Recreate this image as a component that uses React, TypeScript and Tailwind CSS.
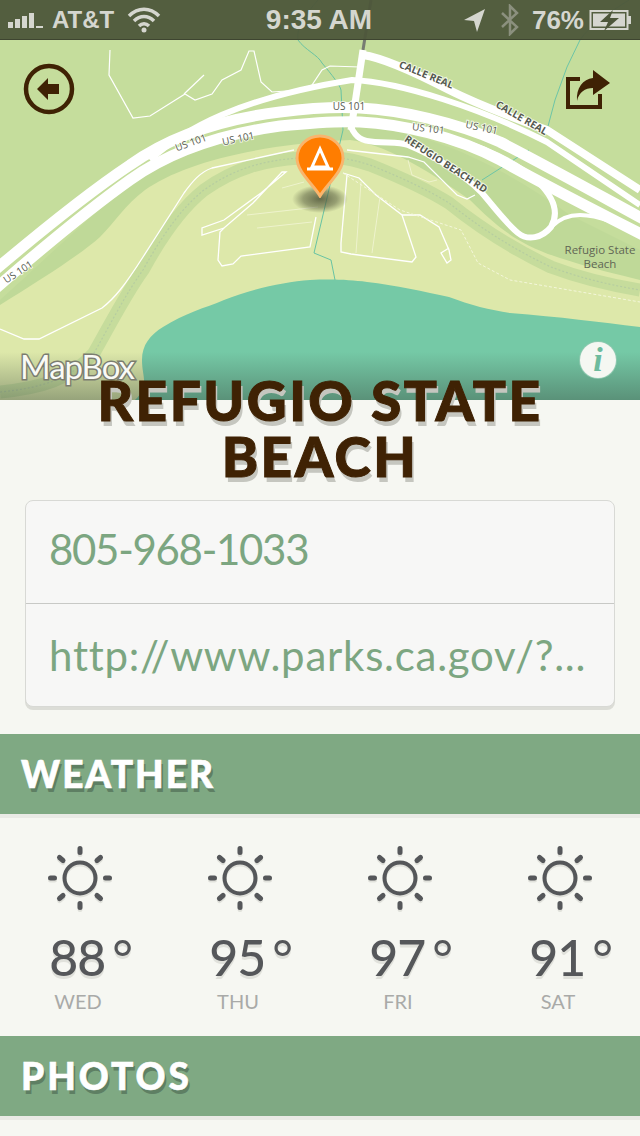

const W = "#ffffff";
const labelFont = "'Open Sans', sans-serif";

function RoadLabel({ x, y, r, t, bold }: { x: number; y: number; r: number; t: string; bold?: boolean }) {
  return (
    <text
      x={0}
      y={0}
      transform={`translate(${x} ${y}) rotate(${r})`}
      textAnchor="middle"
      fontSize={10}
      fontWeight={bold ? 700 : 400}
      fill="#565a50"
      fontFamily={labelFont}
      stroke="#ffffff"
      strokeOpacity="0.75"
      strokeWidth="2"
      paintOrder="stroke"
    >
      {t}
    </text>
  );
}

function MapArt() {
  return (
    <svg viewBox="0 0 640 400" className="absolute inset-0 w-full h-full">
      <defs>
        <linearGradient id="fade" x1="0" y1="0" x2="0" y2="1">
          <stop offset="0" stopColor="#35453a" stopOpacity="0" />
          <stop offset="1" stopColor="#35453a" stopOpacity="0.42" />
        </linearGradient>
        <radialGradient id="sh">
          <stop offset="0" stopColor="#50553a" stopOpacity="0.85" />
          <stop offset="0.6" stopColor="#50553a" stopOpacity="0.5" />
          <stop offset="1" stopColor="#50553a" stopOpacity="0" />
        </radialGradient>
      </defs>
      <rect width="640" height="400" fill="#c5dd9c" />
      <path d="M0 300 C50 255 100 205 150 170 C210 135 290 125 350 125 C430 130 500 165 570 215 L640 250 L640 400 L0 400Z" fill="#bfd998" />
      <path d="M0 305 C40 280 80 255 100 237 C115 222 125 205 145 190 C180 165 250 145 350 140 C385 145 420 165 470 200 C500 230 520 245 560 258 C590 268 620 275 640 280 L640 400 L0 400Z" fill="#dde8aa" />
      <path d="M0 392 C40 388 70 380 94 353 C110 325 125 295 143 270 C165 230 185 205 204 190 C235 168 265 160 300 158 C325 155 345 157 370 165 C395 175 425 188 449 203 C480 228 515 250 551 267 C580 278 610 285 640 290" fill="none" stroke="#c6dc9c" strokeWidth="13" />
      <path d="M0 392 C40 388 70 380 94 353 C110 325 125 295 143 270 C165 230 185 205 204 190 C235 168 265 160 300 158 C325 155 345 157 370 165 C395 175 425 188 449 203 C480 228 515 250 551 267 C580 278 610 285 640 290" fill="none" stroke="#b6cda0" strokeWidth="1.2" strokeDasharray="2 2" />
      <path d="M135 400 C150 385 142 378 142 360 C142 345 150 335 163 327 C185 313 205 308 224 300 C255 288 285 282 310 280 C335 279 350 280 367 282 C395 285 425 292 449 297 C470 305 490 310 510 313 C560 317 600 322 640 327 L640 400Z" fill="#75c9a6" />

      <path d="M318 0 C305 15 296 28 298 40 C305 50 318 55 322 63 C332 75 340 85 341 90 L343 130 L314 253 L331 260 L335 280" fill="none" stroke="#68c3a3" strokeWidth="1" />
      <path d="M629 0 C610 12 590 25 580 40 L567 67 L555 100 L547 130 M529 150 L482 180" fill="none" stroke="#6cc5a7" strokeWidth="1" />

      <path d="M294 150 L212 168 C200 172 192 182 184 193 L143 257 C125 285 115 298 102 308 L39 339 L24 339 L0 329" fill="none" stroke={W} strokeWidth="1.3" />
      <path d="M282 172 L253 203 L224 228 L202 235 L202 228 L224 220 L261 193 L286 172 Z" fill="none" stroke={W} strokeWidth="1.3" />
      <path d="M224 228 L220 232 L218 260 L222 266 L233 264 L241 256 L310 247 L316 217" fill="none" stroke={W} strokeWidth="1.3" />
      <path d="M347 175 L341 243 L341 252 L351 254 L412 262 L416 257 L402 215 L376 195 L359 178 L343 173" fill="none" stroke={W} strokeWidth="1.3" />
      <path d="M402 215 L420 215 L439 227 L449 250 L451 260 L447 263 L441 253 L449 248" fill="none" stroke={W} strokeWidth="1.3" />
      <path d="M347 150 L408 157 L424 162 L457 195 L467 199 L475 195" fill="none" stroke={W} strokeWidth="1.3" />
      <path d="M408 160 L412 175 L429 182 L437 180" fill="none" stroke="#eef3cd" strokeWidth="1" />
      <path d="M247 215 L318 207 M257 228 L312 222 M361 182 L356 253 M380 197 L372 253 M282 188 L304 182" fill="none" stroke="#eef3cd" strokeWidth="1" />
      <path d="M343 173 L400 210 L461 230 L478 263 L510 280 L640 302" fill="none" stroke="#f4f7da" strokeWidth="1" strokeDasharray="3 2" />
      <path d="M110 50 L109 75 L133 118 L150 116 L185 94 L195 100 L212 94 L222 80 L241 70 L249 51 L254 51 L261 82 L272 92 L300 90 L312 85 L322 70 L330 66 L360 67" fill="none" stroke={W} strokeWidth="1.2" />
      <path d="M204 75 L184 94" fill="none" stroke={W} strokeWidth="1.2" />

      <path d="M371 0 L363 50" fill="none" stroke="#777b72" strokeWidth="3" />
      <path d="M363 50 L351 130" fill="none" stroke={W} strokeWidth="7" />
      <path d="M363 55 C385 58 420 75 449 90 C485 108 520 120 547 130 L640 190" fill="none" stroke={W} strokeWidth="8" />
      <path d="M150 160 C185 128 240 98 352 80 C400 82 480 108 547 142 L640 205" fill="none" stroke={W} strokeWidth="6" />
      <path d="M-5 270 C40 232 85 195 130 165 C165 140 215 120 280 112 C320 107 340 107 360 108 C400 110 455 122 500 142 C545 165 590 190 645 220" fill="none" stroke={W} strokeWidth="11" />
      <path d="M-5 289 C40 250 85 212 130 180 C165 155 215 135 280 126 C320 122 340 121 360 122 C400 124 455 136 500 160 C545 185 590 208 645 236" fill="none" stroke={W} strokeWidth="11" />
      <path d="M351 127 C356 138 362 141 375 142 C390 143 400 142 408 145 C432 155 462 172 482 193 C495 208 505 222 518 233 C528 241 542 238 551 227 C558 215 556 200 539 183 C520 165 490 150 457 140" fill="none" stroke={W} strokeWidth="6" />
      <path d="M551 227 C560 218 570 215 580 215 C600 215 620 225 640 235" fill="none" stroke={W} strokeWidth="4" />

      <RoadLabel x={192} y={146} r={-20} t="US 101" />
      <RoadLabel x={239} y={142} r={-12} t="US 101" />
      <RoadLabel x={349} y={110} r={0} t="US 101" />
      <RoadLabel x={428} y={132} r={7} t="US 101" />
      <RoadLabel x={481} y={131} r={12} t="US 101" />
      <RoadLabel x={20} y={275} r={-33} t="US 101" />
      <RoadLabel x={425} y={78} r={22} t="CALLE REAL" bold />
      <RoadLabel x={520} y={121} r={30} t="CALLE REAL" bold />
      <RoadLabel x={444} y={167} r={33} t="REFUGIO BEACH RD" bold />
      <text x="600" y="254" textAnchor="middle" fontSize="11.5" fill="#5f6655" fontFamily={labelFont}>Refugio State</text>
      <text x="600" y="268" textAnchor="middle" fontSize="11.5" fill="#5f6655" fontFamily={labelFont}>Beach</text>

      <ellipse cx="320" cy="199" rx="28" ry="14" fill="url(#sh)" />
      <rect y="352" width="640" height="48" fill="url(#fade)" />
    </svg>
  );
}

function Sun() {
  return (
    <svg width="80" height="80" viewBox="0 0 80 80" className="block">
      {[2, 0].map((dy) => (
        <g key={dy} transform={`translate(0 ${dy})`} stroke={dy ? "#e0e1db" : "#55575a"} fill="none" strokeWidth="5" strokeLinecap="round">
          <circle cx="40" cy="40" r="15.5" strokeWidth="4" />
          <path d="M40 10.5V14.5 M40 65.5V69.5 M10.5 40H14.5 M65.5 40H69.5 M19.5 19.5L23 22.5 M60.5 19.5L57 22.5 M19.5 60.5L23 57.5 M60.5 60.5L57 57.5" />
        </g>
      ))}
    </svg>
  );
}

function Day({ t, d }: { t: string; d: string }) {
  return (
    <div className="flex-1 flex flex-col items-center">
      <Sun />
      <div className="flex items-start h-[50px] mt-[11px] pl-[22px] text-[#55575a] [text-shadow:0_3px_0_#e0e1db]">
        <span className="text-[50px] leading-[56px] tracking-[-1px] font-medium">{t}</span>
        <span className="text-[50px] leading-[56px] ml-[7px]">°</span>
      </div>
      <div className="text-[20px] leading-[24px] mt-[10px] -ml-[4px] text-[#a9aaa8]">{d}</div>
    </div>
  );
}

function Band({ title, tracking }: { title: string; tracking: string }) {
  return (
    <>
      <div className={`h-[80px] bg-[#7fa983] flex items-center pl-[21px] text-[37px] font-black text-white [-webkit-text-stroke:0.6px_#ffffff] [text-shadow:2px_4px_0_#5e7f63] ${tracking}`}>
        {title}
      </div>
      <div className="h-[4px] bg-[#e9eae5]" />
    </>
  );
}

function StatusBar() {
  return (
    <div className="relative h-[40px] shrink-0 bg-[#4d563a]/95 border-b border-[#3e4530] flex items-center justify-between pl-[8px] pr-[7px] text-[#d5d6cf] font-bold [font-family:'Liberation_Sans',sans-serif]">
      <div className="flex items-center w-[172px]">
        <svg width="38" height="18" viewBox="0 0 38 18" fill="#d5d6cf">
          <rect x="0" y="11" width="5" height="6" /><rect x="7" y="8" width="5" height="9" /><rect x="14" y="5" width="5" height="12" /><rect x="21" y="2" width="5" height="15" /><rect x="28" y="15" width="7" height="2" />
        </svg>
        <span className="ml-[6px] text-[24px] leading-[30px]">AT&amp;T</span>
        <svg width="34" height="26" viewBox="0 0 34 26" className="ml-[13px]" fill="none" stroke="#d5d6cf" strokeWidth="3.5">
          <path d="M2 9C11 0 23 0 32 9 M7 14C13 8 21 8 27 14 M12 19C15 16 19 16 22 19" /><circle cx="17" cy="23" r="2.5" fill="#d5d6cf" stroke="none" />
        </svg>
      </div>
      <span className="text-[28px] leading-[34px] -ml-[4px]">9:35 AM</span>
      <div className="flex items-center">
        <svg width="24" height="26" viewBox="0 0 24 26" fill="#d5d6cf"><path d="M2 13L23 2L15 25L12 14Z" /></svg>
        <svg width="20" height="32" viewBox="0 0 20 32" className="ml-[14px]" fill="none" stroke="#8b907e" strokeWidth="2.5"><path d="M2 9L17 23L10 30V2L17 9L2 23" /></svg>
        <span className="ml-[12px] text-[26px] leading-[34px]">76%</span>
        <svg width="44" height="24" viewBox="0 0 44 24" className="ml-[5px]" fill="none"><rect x="1.5" y="3" width="37" height="18" stroke="#d5d6cf" strokeWidth="2" /><rect x="4" y="5.5" width="32" height="13" fill="#d5d6cf" /><rect x="39" y="8" width="3" height="8" fill="#d5d6cf" /><path d="M24 2L11 14H19L15 23L30 10H21Z" fill="#4d563a" /></svg>
      </div>
    </div>
  );
}

export default function App() {
  return (
    <div className="w-[640px] h-[1136px] overflow-hidden bg-[#f6f7f2] [font-family:'Lato',sans-serif]">
      <div className="relative h-[400px] overflow-hidden">
        <MapArt />
        <svg width="50" height="64" viewBox="0 0 50 64" className="absolute left-[295px] top-[134px]">
          <path d="M25 2C12 2 2 12 2 24C2 38 18 50 25 62C32 50 48 38 48 24C48 12 38 2 25 2Z" fill="#ff7d00" stroke="#f9b56d" strokeWidth="3" />
          <path d="M25 15L17 33H33Z" fill="#ff7d00" stroke="#fff" strokeWidth="3" />
          <path d="M12 35H38" stroke="#fff" strokeWidth="3" />
        </svg>

        <div className="relative flex flex-col h-full">
          <StatusBar />
          <div className="flex items-start justify-between pl-[22px] pr-[27px] pt-[22px]">
            <svg width="54" height="54" viewBox="0 0 54 54">
              <circle cx="27" cy="27" r="23" fill="none" stroke="#3f2204" strokeWidth="4.5" />
              <path d="M15 27L26 16V22H37V32H26V38Z" fill="#3f2204" />
            </svg>
            <svg width="48" height="44" viewBox="0 0 48 44" className="mt-[6px]" fill="#3f2204">
              <path d="M1 9H15V13H5V37H33V26H37V41H1Z" />
              <path d="M28 2L45 15L28 27V20C20 20 14 24 12 33C11 20 18 11 28 10Z" />
            </svg>
          </div>
          <div className="flex items-start justify-between pl-[20px] pr-[24px] mt-[226px]">
            <span className="text-[33px] leading-[44px] tracking-[-1px] mt-[2px] font-normal text-[#f9faf5] [-webkit-text-stroke:3px_#7b7d70] [paint-order:stroke_fill]">MapBox</span>
            <div className="w-[36px] h-[36px] rounded-full bg-[#f5f7f2] shadow-[0_0_0_1px_#8fc9b0] flex items-center justify-center text-[34px] leading-none font-bold italic text-[#6dbb9d] [font-family:'Liberation_Serif',serif]">i</div>
          </div>
        </div>
      </div>

      <div className="relative -mt-[28px] text-center text-[55px] leading-[56px] font-black tracking-[2.5px] text-[#3f2204] [-webkit-text-stroke:1px_#3f2204] [text-shadow:2px_5px_0_#c5c6bf]">
        REFUGIO STATE<br />BEACH
      </div>

      <div className="mx-[25px] mt-[16px] w-[590px] h-[207px] rounded-[8px] bg-[#f7f7f6] border border-[#d8d9d5] shadow-[0_3px_0_#dcddd7] text-[#7ca681] text-[42px]">
        <div className="h-[103px] flex items-center pl-[23px] pb-[5px] tracking-[-1.3px] border-b border-[#c8c9c6]">805-968-1033</div>
        <div className="h-[102px] flex items-center pl-[23px] tracking-[0.75px]">http://www.parks.ca.gov/?...</div>
      </div>

      <div className="mt-[27px]"><Band title="WEATHER" tracking="tracking-[2px]" /></div>
      <div className="h-[218px] pt-[20px] flex">
        <Day t="88" d="WED" />
        <Day t="95" d="THU" />
        <Day t="97" d="FRI" />
        <Day t="91" d="SAT" />
      </div>
      <Band title="PHOTOS" tracking="tracking-[3px]" />
    </div>
  );
}
